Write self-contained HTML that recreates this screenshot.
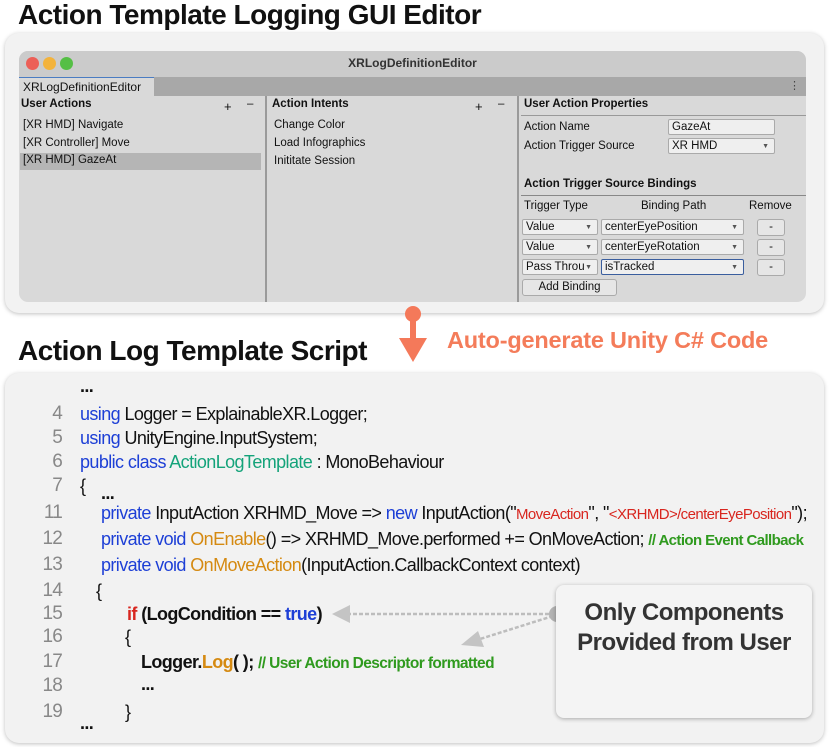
<!DOCTYPE html>
<html><head><meta charset="utf-8"><style>
*{margin:0;padding:0;box-sizing:border-box}
body{width:830px;height:747px;background:#fff;font-family:"Liberation Sans",sans-serif;position:relative;overflow:hidden}
.abs{position:absolute;white-space:nowrap}
.h1{font-weight:bold;font-size:28px;color:#111;letter-spacing:-0.5px}
.card{position:absolute;background:#f2f2f2;border-radius:14px;box-shadow:0 1px 4px rgba(0,0,0,.25)}
.win{position:absolute;left:19px;top:51px;width:787px;height:251px;background:#d9d9d9;border-radius:9px;overflow:hidden}
.tb{position:absolute;left:0;top:0;width:100%;height:26px;background:#cbcbcb;text-align:center;font-weight:bold;font-size:12px;line-height:24px;color:#333}
.dot{position:absolute;top:6px;width:13px;height:13px;border-radius:50%}
.tabbar{position:absolute;left:0;top:26px;width:100%;height:19px;background:#a8a8a8}
.tab{position:absolute;left:0;top:0;width:135px;height:19px;background:#d9d9d9;border-top:1px solid #4a7cc2;font-size:12px;line-height:18px;padding-left:4px;color:#111}
.t{font-size:11.5px;color:#111}
.b{font-weight:bold}
.vd{position:absolute;top:45px;width:2px;height:206px;background:#9a9a9a}
.fld{position:absolute;background:#efefef;border:1px solid #aaa;border-radius:2px;font-size:11.5px;line-height:14px;padding-left:3px;color:#111}
.arr:after{content:"▼";position:absolute;right:5px;top:1px;font-size:7px;color:#555}
.btn{position:absolute;background:#e6e6e6;border:1px solid #aaa;border-radius:3px;font-size:11.5px;text-align:center;line-height:14px;color:#111}
.code{font-size:18px;letter-spacing:-0.6px;color:#111}
.ln{position:absolute;font-size:19px;color:#888;width:32px;text-align:right;left:30px;letter-spacing:-0.8px}
.k{color:#1d3fd6}.g{color:#14a37a}.o{color:#d58a12}.r{color:#d8261f}.c{color:#2f9a1e;font-weight:bold}
</style></head><body>
<div class="abs h1" style="left:18px;top:-1px">Action Template Logging GUI Editor</div>
<div class="card" style="left:5px;top:33px;width:819px;height:280px"></div>
<div class="win">
 <div class="tb">XRLogDefinitionEditor</div>
 <div class="dot" style="left:7px;background:#ec5f57"></div>
 <div class="dot" style="left:24px;background:#f3b33c"></div>
 <div class="dot" style="left:41px;background:#55bf45"></div>
 <div class="tabbar"><div class="tab">XRLogDefinitionEditor</div><div class="abs" style="right:6px;top:2px;font-size:11px;color:#444">⋮</div></div>
 <div class="vd" style="left:246px"></div>
 <div class="vd" style="left:498px"></div>
 <div class="abs t b" style="left:2px;top:47px">User Actions</div>
 <div class="abs t" style="left:205px;top:48px;font-size:13px">+</div>
 <div class="abs t" style="left:228px;top:47px">–</div>
 <div class="abs t" style="left:4px;top:68px">[XR HMD] Navigate</div>
 <div class="abs t" style="left:4px;top:86px">[XR Controller] Move</div>
 <div class="abs" style="left:1px;top:102px;width:241px;height:17px;background:#b5b5b5"></div>
 <div class="abs t" style="left:4px;top:103px">[XR HMD] GazeAt</div>
 <div class="abs t b" style="left:253px;top:47px">Action Intents</div>
 <div class="abs t" style="left:456px;top:48px;font-size:13px">+</div>
 <div class="abs t" style="left:479px;top:47px">–</div>
 <div class="abs t" style="left:255px;top:68px">Change Color</div>
 <div class="abs t" style="left:255px;top:86px">Load Infographics</div>
 <div class="abs t" style="left:255px;top:104px">Inititate Session</div>
 <div class="abs t b" style="left:505px;top:47px">User Action Properties</div>
 <div class="abs" style="left:502px;top:64px;width:285px;height:1px;background:#999"></div>
 <div class="abs t" style="left:505px;top:70px">Action Name</div>
 <div class="fld" style="left:649px;top:68px;width:107px;height:16px">GazeAt</div>
 <div class="abs t" style="left:505px;top:89px">Action Trigger Source</div>
 <div class="fld arr" style="left:649px;top:87px;width:107px;height:16px">XR HMD</div>
 <div class="abs t b" style="left:505px;top:127px">Action Trigger Source Bindings</div>
 <div class="abs" style="left:502px;top:144px;width:285px;height:1px;background:#888"></div>
 <div class="abs t" style="left:505px;top:149px">Trigger Type</div>
 <div class="abs t" style="left:622px;top:149px">Binding Path</div>
 <div class="abs t" style="left:730px;top:149px">Remove</div>
 <div class="fld arr" style="left:503px;top:168px;width:76px;height:16px">Value</div>
 <div class="fld arr" style="left:582px;top:168px;width:143px;height:16px">centerEyePosition</div>
 <div class="btn" style="left:738px;top:168px;width:28px;height:17px">-</div>
 <div class="fld arr" style="left:503px;top:188px;width:76px;height:16px">Value</div>
 <div class="fld arr" style="left:582px;top:188px;width:143px;height:16px">centerEyeRotation</div>
 <div class="btn" style="left:738px;top:188px;width:28px;height:17px">-</div>
 <div class="fld arr" style="left:503px;top:208px;width:76px;height:16px;overflow:hidden">Pass Throu</div>
 <div class="fld arr" style="left:582px;top:208px;width:143px;height:16px;border-color:#3a5e9e">isTracked</div>
 <div class="btn" style="left:738px;top:208px;width:28px;height:17px">-</div>
 <div class="btn" style="left:503px;top:228px;width:95px;height:17px">Add Binding</div>
</div>
<svg class="abs" style="left:398px;top:304px" width="32" height="60"><circle cx="15" cy="10" r="8" fill="#f4795a"/><rect x="12" y="12" width="6" height="26" fill="#f4795a"/><polygon points="1,34 29,34 15,58" fill="#f4795a"/></svg>
<div class="abs" style="left:447px;top:327px;font-size:23.5px;font-weight:bold;color:#f47c5a;letter-spacing:-0.2px">Auto-generate Unity C# Code</div>
<div class="abs h1" style="left:18px;top:335px">Action Log Template Script</div>
<div class="card" style="left:5px;top:373px;width:819px;height:370px"></div>
<div class="abs code b" style="left:80px;top:376px">...</div>
<div class="ln" style="top:403px">4</div><div class="abs code" style="left:80px;top:404px"><span class="k">using</span> Logger = ExplainableXR.Logger;</div>
<div class="ln" style="top:427px">5</div><div class="abs code" style="left:80px;top:428px"><span class="k">using</span> UnityEngine.InputSystem;</div>
<div class="ln" style="top:451px">6</div><div class="abs code" style="left:80px;top:452px"><span class="k">public class</span> <span class="g">ActionLogTemplate</span> : MonoBehaviour</div>
<div class="ln" style="top:475px">7</div><div class="abs code" style="left:80px;top:476px">{</div>
<div class="abs code b" style="left:101px;top:483px">...</div>
<div class="ln" style="top:502px">11</div><div class="abs code" style="left:101px;top:503px"><span class="k">private</span> InputAction XRHMD_Move =&gt; <span class="k">new</span> InputAction("<span class="r" style="font-size:15px">MoveAction</span>", "<span class="r" style="font-size:15px">&lt;XRHMD&gt;/centerEyePosition</span>");</div>
<div class="ln" style="top:528px">12</div><div class="abs code" style="left:101px;top:529px"><span class="k">private void</span> <span class="o">OnEnable</span>() =&gt; XRHMD_Move.performed += OnMoveAction; <span class="c" style="font-size:15px"> // Action Event Callback</span></div>
<div class="ln" style="top:554px">13</div><div class="abs code" style="left:101px;top:555px"><span class="k">private void</span> <span class="o">OnMoveAction</span>(InputAction.CallbackContext context)</div>
<div class="ln" style="top:580px">14</div><div class="abs code" style="left:96px;top:581px">{</div>
<div class="ln" style="top:603px">15</div><div class="abs code b" style="left:127px;top:604px"><span class="r">if</span> (LogCondition == <span class="k">true</span>)</div>
<div class="ln" style="top:626px">16</div><div class="abs code" style="left:125px;top:627px">{</div>
<div class="ln" style="top:651px">17</div><div class="abs code b" style="left:141px;top:652px">Logger.<span class="o">Log</span>( ); <span class="c" style="font-size:15.5px">// User Action Descriptor formatted</span></div>
<div class="ln" style="top:675px">18</div><div class="abs code b" style="left:141px;top:674px">...</div>
<div class="ln" style="top:701px">19</div><div class="abs code" style="left:125px;top:702px">}</div>
<div class="abs code b" style="left:80px;top:713px">...</div>
<svg class="abs" style="left:320px;top:595px" width="250" height="60"><line x1="235" y1="19" x2="28" y2="19" stroke="#bdbdbd" stroke-width="2.5" stroke-dasharray="4,2"/><polygon points="12,19 30,10 30,28" fill="#c4c4c4"/><line x1="233" y1="21" x2="160" y2="44" stroke="#bdbdbd" stroke-width="2.5" stroke-dasharray="4,2"/><polygon points="141,50 158,36 164,52" fill="#c4c4c4"/><circle cx="237" cy="19" r="8" fill="#b3b3b3"/></svg>
<div class="abs" style="left:556px;top:585px;width:256px;height:133px;background:#f4f4f4;border-radius:8px;box-shadow:0 1px 4px rgba(0,0,0,.3)"></div>
<div class="abs" style="left:556px;top:598px;width:256px;text-align:center;font-size:24px;font-weight:bold;color:#333;line-height:30px;letter-spacing:-0.5px">Only Components<br>Provided from User</div>
</body></html>
